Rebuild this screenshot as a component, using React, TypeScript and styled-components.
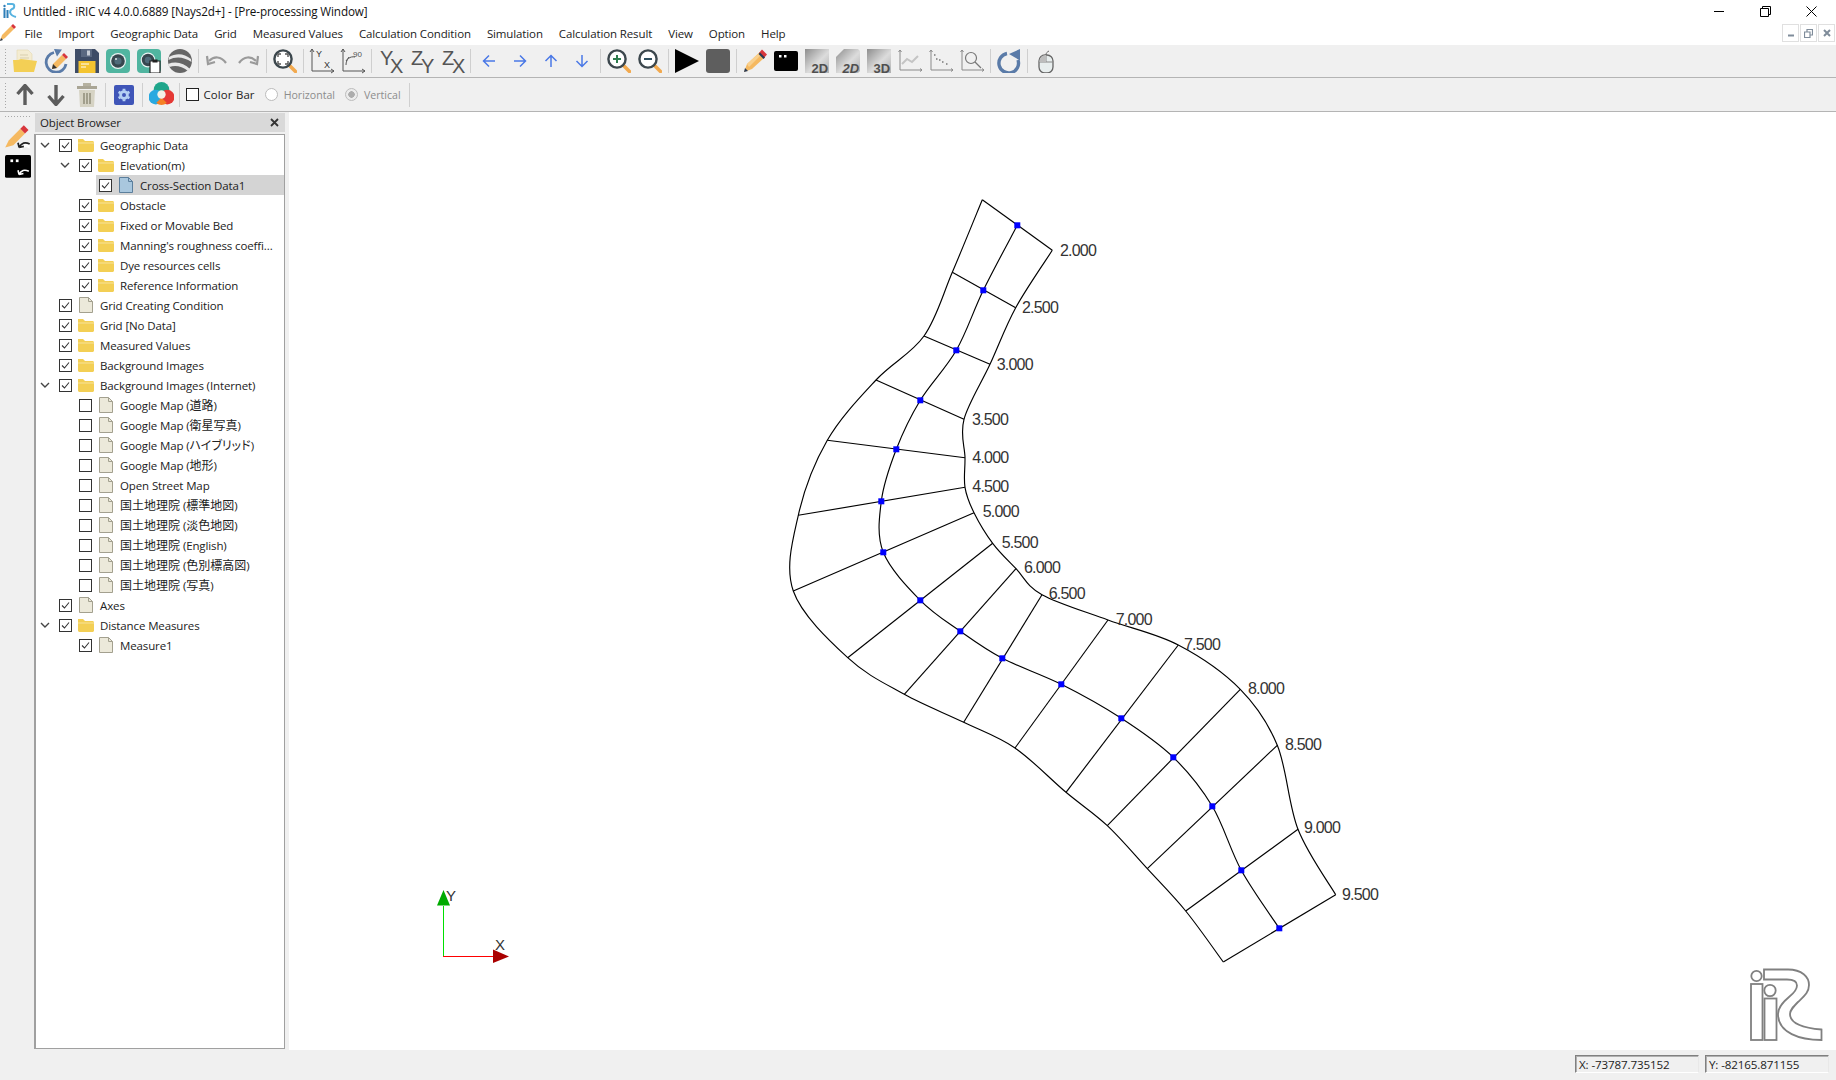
import React from "react";
import styled, { createGlobalStyle } from "styled-components";

const UI_FONT = `"Open Sans", "Noto Sans CJK JP", sans-serif`;

const GlobalStyle = createGlobalStyle`
  html, body {
    margin: 0;
    padding: 0;
    background: #fff;
    overflow: hidden;
  }
  body {
    font-family: ${UI_FONT};
    font-size: 12px;
    color: #222;
  }
`;

const Window = styled.div`
  width: 1836px;
  height: 1080px;
  display: flex;
  flex-direction: column;
  overflow: hidden;
`;

const TitleBar = styled.div`
  height: 22px;
  display: flex;
  align-items: center;
  padding: 0 2px 0 3px;
  background: #fff;
`;

const TitleText = styled.span`
  margin-left: 6px;
  font-size: 11.7px;
  letter-spacing: -0.12px;
  color: #111;
`;

const WinButton = styled.div`
  width: 46px;
  height: 22px;
  display: flex;
  align-items: center;
  justify-content: center;
`;

const WinButtons = styled.div`
  margin-left: auto;
  display: flex;
`;

const MenuBar = styled.div`
  height: 22px;
  display: flex;
  align-items: center;
  padding-right: 1px;
  background: #fff;
  border-bottom: 1px solid #fff;
`;

const MenuIcon = styled.div`
  width: 16px;
  height: 18px;
  display: flex;
  margin-right: 0.5px;
`;

const MenuItem = styled.span`
  padding: 0 8px;
  font-size: 11.5px;
  letter-spacing: -0.12px;
  white-space: nowrap;
`;

const MdiButtons = styled.div`
  margin-left: auto;
  display: flex;
  gap: 1px;
`;

const MdiButton = styled.div`
  width: 15px;
  height: 16px;
  border: 1px solid #e0e0e0;
  display: flex;
  align-items: center;
  justify-content: center;
`;

const Toolbar = styled.div<{ $h: number }>`
  height: ${({ $h }) => $h}px;
  display: flex;
  align-items: center;
  padding-left: 4px;
  background: #f0f0f0;
  border-bottom: 1px solid #b4b4b4;
`;

const Handle = styled.div`
  width: 3px;
  height: 26px;
  margin-right: 2.5px;
  background-image: radial-gradient(circle, #a8a8a8 0.8px, transparent 1px);
  background-size: 3px 3px;
`;

const ToolButton = styled.div`
  width: 31px;
  height: 26px;
  display: flex;
  align-items: center;
  justify-content: center;
  flex: none;
`;

const Separator = styled.div`
  width: 1px;
  height: 24px;
  margin: 0 2.5px;
  background: #cfcfcf;
  flex: none;
`;

const EndSeparator = styled(Separator)`
  margin-left: 8px;
`;

const OptionBox = styled.div`
  width: 11px;
  height: 11px;
  margin: 0 5px 0 3px;
  border: 1px solid #222;
  background: #fff;
  flex: none;
`;

const OptionText = styled.span<{ $off?: boolean }>`
  font-size: ${({ $off }) => ($off ? "10.6px" : "11.4px")};
  letter-spacing: ${({ $off }) => ($off ? "0" : "0.1px")};
  word-spacing: ${({ $off }) => ($off ? "0" : "0.5px")};
  color: ${({ $off }) => ($off ? "#8c8c8c" : "#222")};
`;

const Radio = styled.div<{ $on?: boolean }>`
  width: 11px;
  height: 11px;
  margin: 0 6px 0 10px;
  border: 1px solid #bcbcbc;
  border-radius: 50%;
  background: ${({ $on }) => ($on ? "radial-gradient(circle, #adadad 3px, #ececec 3.5px)" : "#fff")};
  flex: none;
`;

const Main = styled.div`
  flex: 1;
  display: flex;
  min-height: 0;
`;

const Dock = styled.div`
  width: 289px;
  display: flex;
  background: #f0f0f0;
  flex: none;
`;

const Rail = styled.div`
  width: 35px;
  display: flex;
  flex-direction: column;
  align-items: center;
  flex: none;
`;

const RailHandle = styled.div`
  width: 28px;
  height: 3px;
  margin: 3px 0 4px;
  background-image: radial-gradient(circle, #a8a8a8 0.8px, transparent 1px);
  background-size: 3px 3px;
`;

const RailButton = styled.div`
  width: 30px;
  height: 30px;
  display: flex;
  align-items: center;
  justify-content: center;
`;

const Panel = styled.div`
  width: 250px;
  padding: 1px 0;
  display: flex;
  flex-direction: column;
  flex: none;
`;

const PanelTitle = styled.div`
  height: 19px;
  margin-bottom: 2px;
  padding: 0 6px 0 5px;
  display: flex;
  align-items: center;
  justify-content: space-between;
  background: #d9d9d9;
  font-size: 11.5px;
  letter-spacing: -0.12px;
`;

const Tree = styled.div`
  flex: 1;
  background: #fff;
  border: 1px solid #a0a0a0;
  border-width: 1px 1px 1px 2px;
  margin-left: -1px;
`;

const Row = styled.div<{ $depth: number }>`
  height: 20px;
  display: flex;
  align-items: center;
  padding-left: ${({ $depth }) => $depth * 20}px;
`;

const Arrow = styled.div`
  width: 20px;
  height: 20px;
  display: flex;
  align-items: center;
  padding-left: 4px;
  box-sizing: border-box;
  flex: none;
`;

const RowBody = styled.div<{ $selected?: boolean }>`
  flex: 1;
  height: 20px;
  display: flex;
  align-items: center;
  padding-left: 3px;
  min-width: 0;
  background: ${({ $selected }) => ($selected ? "#d4d4d4" : "transparent")};
`;

const Check = styled.div`
  width: 11px;
  height: 11px;
  border: 1px solid #333;
  background: #fff;
  display: flex;
  align-items: center;
  justify-content: center;
  flex: none;
`;

const NodeIcon = styled.div`
  width: 16px;
  height: 16px;
  margin: 0 6px 0 6px;
  display: flex;
  align-items: center;
  justify-content: center;
  flex: none;
`;

const NodeText = styled.span`
  font-size: 11.5px;
  letter-spacing: -0.12px;
  white-space: nowrap;
`;

const CjkRun = styled.span`
  font-size: 12px;
  letter-spacing: 0;
  font-feature-settings: "palt";
`;

const Canvas = styled.div`
  flex: 1;
  background: #fff;
  min-width: 0;
`;

const CanvasSvg = styled.svg`
  display: block;
  width: 100%;
  height: 100%;
`;

const StatusBar = styled.div`
  height: 30px;
  display: flex;
  align-items: center;
  justify-content: flex-end;
  gap: 6px;
  padding: 0 7px 2px 0;
  box-sizing: border-box;
  background: #f0f0f0;
`;

const StatusBox = styled.div`
  width: 124px;
  height: 18px;
  box-sizing: border-box;
  padding-left: 3px;
  display: flex;
  align-items: center;
  border: 1px solid;
  border-color: #808080 #e8e8e8 #fff #808080;
  box-shadow: inset 1px 1px 0 #b0b0b0;
  font-size: 11.6px;
  letter-spacing: -0.12px;
`;

// ---------- toolbar icons ----------

const Ico = ({ children, size = 24 }: { children: React.ReactNode; size?: number }) => (
  <svg width={size} height={size} viewBox="0 0 24 24">
    {children}
  </svg>
);

const FolderOpen = () => (
  <Ico>
    <path d="M4 1h11l4 4v9H4z" fill="#f4ecd2" stroke="#e4d8b0" strokeWidth="0.6" />
    <path d="M7 6h8M7 9h9M7 12h9" stroke="#d9cfae" strokeWidth="1" />
    <path d="M0 11h5l3-1 16 2-3 11H1z" fill="#f3cf55" />
  </Ico>
);

const ReloadEdit = () => (
  <Ico>
    <path d="M10 3.500A10 10 0 1 0 22 15" fill="none" stroke="#5a7ba8" strokeWidth="2.800" />
    <path d="M10 0l8 .5-5 7z" fill="#5a7ba8" />
    <path d="M8 20l1-5L18 6l4 4-9 9z" fill="#f5b961" />
    <path d="M18 6l2-2 4 4-2 2z" fill="#d8363c" />
    <path d="M8 20l1-5 4 4z" fill="#333" />
  </Ico>
);

const Save = () => (
  <Ico>
    <path d="M0 0h20l4 4v20H0z" fill="#3e4c66" />
    <rect x="6" y="0" width="11" height="8" fill="#5a6880" />
    <rect x="12" y="1.500" width="3" height="5" fill="#c7cdd6" />
    <rect x="3.500" y="12" width="17" height="12" fill="#f4c430" />
    <path d="M6 15h8M6 18h5" stroke="#fff" strokeWidth="1" />
  </Ico>
);

const Camera = () => (
  <Ico>
    <rect width="24" height="24" rx="4" fill="#50b5a0" />
    <circle cx="12" cy="12" r="8" fill="#eaf4f3" />
    <circle cx="12" cy="12" r="6.800" fill="#37474f" />
    <circle cx="12" cy="12" r="3.600" fill="#4f6b7a" />
    <circle cx="10" cy="10" r="1" fill="#dfe8ea" />
  </Ico>
);

const CameraCopy = () => (
  <Ico>
    <rect width="24" height="24" rx="4" fill="#50b5a0" />
    <circle cx="11" cy="11" r="7.400" fill="#eaf4f3" />
    <circle cx="11" cy="11" r="6.200" fill="#37474f" />
    <circle cx="11" cy="11" r="3.200" fill="#4f6b7a" />
    <path d="M13 12h10v12H13z" fill="#fff" stroke="#222" strokeWidth="1.200" />
    <rect x="15.500" y="10.500" width="5" height="3" fill="#222" />
  </Ico>
);

const Globe = () => (
  <Ico>
    <circle cx="12" cy="12" r="12" fill="#666" />
    <path d="M1 8c7-4 15-4 22 2l.5 3C16 8 8 7 .5 11zM0 15c8-3 16-1 22 5l-2 2C14 17 7 16 1.500 18z" fill="#e8e8e8" />
  </Ico>
);

const UndoIcon = ({ flip }: { flip?: boolean }) => (
  <Ico>
    <g transform={flip ? "translate(24 0) scale(-1 1)" : undefined}>
      <path d="M4 12c5-5 12-5 17 2" fill="none" stroke="#9a9a9a" strokeWidth="2.200" />
      <path d="M2 7l1 8 7-2" fill="none" stroke="#9a9a9a" strokeWidth="2.200" />
    </g>
  </Ico>
);

const Lens = ({ children }: { children?: React.ReactNode }) => (
  <Ico>
    <path d="M16 16l6.500 6.500" stroke="#f2a94e" strokeWidth="3.600" strokeLinecap="round" />
    <circle cx="10" cy="10" r="8.600" fill="#fff" stroke="#3c474d" strokeWidth="2.400" />
    {children}
  </Ico>
);

const GlyphPair = ({ a, b }: { a: string; b: string }) => (
  <svg width="31" height="32" viewBox="0 0 31 32">
    <text x="5" y="20" fontFamily="Liberation Sans" fontSize="20" fill="#555">{a}</text>
    <text x="15" y="28" fontFamily="Liberation Sans" fontSize="20" fill="#555">{b}</text>
  </svg>
);

const AxisIcon = ({ angle }: { angle?: boolean }) => (
  <svg width="26" height="26" viewBox="0 0 26 26">
    <path d="M3 1v22h22M1 4l2-3 2 3M22 21l3 2-3 2" fill="none" stroke="#555" strokeWidth="1" />
    {angle ? (
      <>
        <path d="M6 17c0-6 4-9 9-8M9 9l-3 4" fill="none" stroke="#555" strokeWidth="1" />
        <text x="13" y="9" fontFamily="Liberation Sans" fontSize="8" fill="#555">90</text>
      </>
    ) : (
      <>
        <text x="7" y="9" fontFamily="Liberation Sans" fontSize="9" fill="#333">Y</text>
        <text x="15" y="20" fontFamily="Liberation Sans" fontSize="9" fill="#333">X</text>
      </>
    )}
  </svg>
);

const BlueArrow = ({ rot }: { rot: number }) => (
  <svg width="14" height="14" viewBox="0 0 14 14">
    <g transform={`rotate(${rot} 7 7)`}>
      <path d="M1 7h12M7 1.500L1.500 7 7 12.500" fill="none" stroke="#4a78e6" strokeWidth="1.500" />
    </g>
  </svg>
);

const Pencil = () => (
  <Ico>
    <path d="M1 23l3-8L17 3l5 5L9 20z" fill="#f5b961" />
    <path d="M4 15l13-12 2 2L6 18z" fill="#f9d08d" />
    <path d="M16 4l3-3.500 5 5L21 9z" fill="#d8363c" />
    <path d="M15.500 5l1.500-1.500 5 5L20.500 10z" fill="#283a55" />
    <path d="M1 23l1-4 3 3z" fill="#283a55" />
  </Ico>
);

const Console = () => (
  <Ico>
    <rect x="0" y="2" width="24" height="20" rx="2" fill="#000" />
    <rect x="5" y="6" width="2.500" height="2.500" fill="#fff" />
    <rect x="10" y="6" width="2.500" height="2.500" fill="#fff" />
  </Ico>
);

const ViewTile = ({ id, label, cut }: { id: string; label: string; cut?: boolean }) => (
  <svg width="24" height="32" viewBox="0 -4 24 32">
    <defs>
      <linearGradient id={id} x1="0" y1="0" x2="1" y2="1">
        <stop offset="0" stopColor="#8d8d8d" />
        <stop offset="0.55" stopColor="#dcdcdc" />
        <stop offset="1" stopColor="#b0b0b0" />
      </linearGradient>
    </defs>
    <path d={cut ? "M8 0h14l2 2v20l-2 2H0V8z" : "M0 0h24v24H0z"} fill={`url(#${id})`} />
    <text x="6.500" y="23.500" fontFamily="Liberation Sans" fontWeight="700" fontStyle={cut ? "italic" : "normal"} fontSize="13" fill="#4f4f4f">
      {label}
    </text>
  </svg>
);

const PlotFrame = ({ children }: { children: React.ReactNode }) => (
  <svg width="25" height="24" viewBox="0 0 25 24">
    <path d="M2 1v20h22M.5 3L2 1l1.500 2M22 19.500l2 1.500-2 1.500" fill="none" stroke="#8a8a8a" strokeWidth="1" />
    {children}
  </svg>
);

const ReloadBig = () => (
  <Ico>
    <path d="M10 4.500A9.800 9.800 0 1 0 21 11" fill="none" stroke="#5a7ba8" strokeWidth="3.400" />
    <path d="M12 5l11-5v11.500z" fill="#5a7ba8" />
  </Ico>
);

const MouseIcon = () => (
  <Ico>
    <path d="M12 6c0-2 1-3 3-4" fill="none" stroke="#666" strokeWidth="1" />
    <rect x="5" y="6" width="14" height="18" rx="6" fill="#e8eeee" stroke="#666" strokeWidth="1.300" />
    <path d="M5 13h14M12 6v7" stroke="#888" strokeWidth="1" />
    <path d="M5.500 13V12a6 6 0 0 1 6-6H12v7z" fill="#bdbdbd" />
  </Ico>
);

const BigArrow = ({ down }: { down?: boolean }) => (
  <svg width="18" height="22" viewBox="0 0 18 22">
    <g transform={down ? "rotate(180 9 11)" : undefined}>
      <path d="M1.500 10L9 1.500 16.500 10M9 3v18" fill="none" stroke="#5c5c5c" strokeWidth="3.400" />
    </g>
  </svg>
);

const Trash = () => (
  <svg width="20" height="24" viewBox="0 0 20 24">
    <rect x="6" y="0" width="8" height="3" fill="#b5b1a0" />
    <rect x="0" y="3" width="20" height="3" fill="#a9a595" />
    <path d="M2 7h16l-1 17H3z" fill="#d6d3c4" />
    <path d="M7 10v11M10 10v11M13 10v11" stroke="#86836f" strokeWidth="1.300" />
  </svg>
);

const GearTile = () => (
  <svg width="20" height="20" viewBox="0 0 20 20">
    <rect width="20" height="20" rx="2" fill="#3f55b8" />
    <circle cx="10" cy="10" r="3.400" fill="none" stroke="#b4d0f4" strokeWidth="2.800" />
    <path d="M10 3.800v2M10 14.200v2M4.600 6.900l1.700 1M13.700 12.100l1.700 1M4.600 13.100l1.700-1M13.700 7.900l1.700-1" stroke="#b4d0f4" strokeWidth="2.800" />
  </svg>
);

const ColorWheel = () => (
  <Ico size={25}>
    <circle cx="12" cy="7.500" r="7.500" fill="#1fa68b" />
    <circle cx="6.500" cy="14.500" r="7" fill="#29a9e0" />
    <circle cx="17.500" cy="14.500" r="7" fill="#e53935" />
    <path d="M7 20a7 7 0 0 0 10 0l-5-5z" fill="#f58025" />
    <circle cx="12" cy="12" r="4" fill="#f4f1e6" />
  </Ico>
);

// ---------- menu / rail icons ----------

const MenuPencil = () => (
  <svg width="16" height="18" viewBox="0 0 16 18">
    <path d="M0 17l2-6 9-9 3 3-9 9z" fill="#f5b961" />
    <path d="M11 2l2-2 3 3-2 2z" fill="#d8363c" />
    <path d="M0 17l1-3 2 2z" fill="#283a55" />
  </svg>
);

const AppMark = () => (
  <svg width="14" height="16" viewBox="0 0 14 16">
    <rect x="0.500" y="5" width="2" height="10" fill="#2f7fb8" />
    <rect x="3.500" y="7" width="2" height="8" fill="#2f7fb8" />
    <circle cx="1.500" cy="3" r="1.200" fill="#2f7fb8" />
    <path d="M4 1h5c3 0 3 4 0 5-3 2-3 6 4 8" fill="none" stroke="#58b3e0" strokeWidth="2" />
  </svg>
);

// ---------- tree icons ----------

const FolderIcon = () => (
  <svg width="16" height="14" viewBox="0 0 16 14">
    <path d="M0 1h5l2 2h8l1 1v9l-1 1H1l-1-1z" fill="#f3cf55" />
    <path d="M0 5h16" stroke="#f8e39a" strokeWidth="1" />
  </svg>
);

const DocIcon = ({ blue }: { blue?: boolean }) => (
  <svg width="14" height="16" viewBox="0 0 14 16">
    <path
      d="M.5.500h9l4 4v11H.5z"
      fill={blue ? "#a9c7de" : "#ece9da"}
      stroke={blue ? "#5c7f9c" : "#a3a08f"}
      strokeWidth="1"
    />
    <path d="M9.500.500v4h4" fill="none" stroke={blue ? "#5c7f9c" : "#a3a08f"} strokeWidth="1" />
  </svg>
);

const Chevron = () => (
  <svg width="10" height="7" viewBox="0 0 10 7">
    <path d="M1 1l4 4 4-4" fill="none" stroke="#444" strokeWidth="1.400" />
  </svg>
);

const Tick = () => (
  <svg width="11" height="11" viewBox="0 0 11 11">
    <path d="M2 5.500l2.500 2.500L9 2.500" fill="none" stroke="#333" strokeWidth="1.100" />
  </svg>
);

// ---------- data ----------

interface NodeI {
  label: string;
  depth: number;
  icon: "folder" | "doc" | "blue";
  open?: boolean;
  checked?: boolean;
  selected?: boolean;
}

const nodes: NodeI[] = [
  { label: "Geographic Data", depth: 0, icon: "folder", open: true, checked: true },
  { label: "Elevation(m)", depth: 1, icon: "folder", open: true, checked: true },
  { label: "Cross-Section Data1", depth: 2, icon: "blue", checked: true, selected: true },
  { label: "Obstacle", depth: 1, icon: "folder", checked: true },
  { label: "Fixed or Movable Bed", depth: 1, icon: "folder", checked: true },
  { label: "Manning's roughness coeffi...", depth: 1, icon: "folder", checked: true },
  { label: "Dye resources cells", depth: 1, icon: "folder", checked: true },
  { label: "Reference Information", depth: 1, icon: "folder", checked: true },
  { label: "Grid Creating Condition", depth: 0, icon: "doc", checked: true },
  { label: "Grid [No Data]", depth: 0, icon: "folder", checked: true },
  { label: "Measured Values", depth: 0, icon: "folder", checked: true },
  { label: "Background Images", depth: 0, icon: "folder", checked: true },
  { label: "Background Images (Internet)", depth: 0, icon: "folder", open: true, checked: true },
  { label: "Google Map (道路)", depth: 1, icon: "doc" },
  { label: "Google Map (衛星写真)", depth: 1, icon: "doc" },
  { label: "Google Map (ハイブリッド)", depth: 1, icon: "doc" },
  { label: "Google Map (地形)", depth: 1, icon: "doc" },
  { label: "Open Street Map", depth: 1, icon: "doc" },
  { label: "国土地理院 (標準地図)", depth: 1, icon: "doc" },
  { label: "国土地理院 (淡色地図)", depth: 1, icon: "doc" },
  { label: "国土地理院 (English)", depth: 1, icon: "doc" },
  { label: "国土地理院 (色別標高図)", depth: 1, icon: "doc" },
  { label: "国土地理院 (写真)", depth: 1, icon: "doc" },
  { label: "Axes", depth: 0, icon: "doc", checked: true },
  { label: "Distance Measures", depth: 0, icon: "folder", open: true, checked: true },
  { label: "Measure1", depth: 1, icon: "doc", checked: true },
];

const menus = [
  "File",
  "Import",
  "Geographic Data",
  "Grid",
  "Measured Values",
  "Calculation Condition",
  "Simulation",
  "Calculation Result",
  "View",
  "Option",
  "Help",
];

type Pt = [number, number];

// cross sections, station by station
const leftBank: Pt[] = [
  [982.3, 199.7], [952.3, 272.3], [924, 336], [876, 380], [827.3, 440.3], [798.3, 515.3],
  [793.3, 591], [847.7, 657.7], [904.3, 694.3], [963.7, 722.3], [1015, 748], [1066, 792.3],
  [1107.3, 825.7], [1147.3, 868.7], [1185.7, 911], [1223.3, 962],
];
const center: Pt[] = [
  [1017.3, 225.3], [983.3, 290.3], [956.3, 350.3], [920.3, 400.3], [896.3, 449.3], [881.3, 501.3],
  [883.3, 552.3], [920.3, 600.3], [960.3, 631.3], [1002.3, 658.3], [1061.3, 684.3], [1121.3, 718.3],
  [1173.3, 757.3], [1212.3, 806.3], [1241.3, 870.3], [1279.3, 928.3],
];
const rightBank: Pt[] = [
  [1052.3, 250.3], [1015.7, 307.7], [990, 364.3], [964, 419.3], [965, 457.7], [965, 487.3],
  [974, 512.7], [992.7, 543.3], [1016, 568.7], [1042, 594.7], [1108, 620], [1178.3, 645],
  [1240.3, 689.3], [1277.3, 745.3], [1298, 829.3], [1335.7, 894.7],
];

const stations: { text: string; x: number; y: number }[] = [
  { text: "2.000", x: 1060, y: 256 },
  { text: "2.500", x: 1022, y: 312.7 },
  { text: "3.000", x: 996.7, y: 369.7 },
  { text: "3.500", x: 972, y: 425 },
  { text: "4.000", x: 972.3, y: 463 },
  { text: "4.500", x: 972.3, y: 492 },
  { text: "5.000", x: 982.7, y: 516.7 },
  { text: "5.500", x: 1001.7, y: 547.7 },
  { text: "6.000", x: 1024, y: 572.7 },
  { text: "6.500", x: 1048.7, y: 598.7 },
  { text: "7.000", x: 1115.7, y: 624.7 },
  { text: "7.500", x: 1184, y: 650 },
  { text: "8.000", x: 1248, y: 694 },
  { text: "8.500", x: 1285, y: 750 },
  { text: "9.000", x: 1304, y: 832.7 },
  { text: "9.500", x: 1342, y: 899.7 },
];

// Catmull-Rom through the stations
const spline = (pts: Pt[]) => {
  let d = `M${pts[0][0]},${pts[0][1]}`;
  for (let i = 0; i < pts.length - 1; i++) {
    const p0 = pts[Math.max(i - 1, 0)];
    const p1 = pts[i];
    const p2 = pts[i + 1];
    const p3 = pts[Math.min(i + 2, pts.length - 1)];
    const c1x = p1[0] + (p2[0] - p0[0]) / 6;
    const c1y = p1[1] + (p2[1] - p0[1]) / 6;
    const c2x = p2[0] - (p3[0] - p1[0]) / 6;
    const c2y = p2[1] - (p3[1] - p1[1]) / 6;
    d += ` C${c1x},${c1y} ${c2x},${c2y} ${p2[0]},${p2[1]}`;
  }
  return d;
};

const GridDrawing = () => (
  <CanvasSvg viewBox="289 112 1547 938">
    <g fill="none" stroke="#000" strokeWidth="1.150">
      <path d={spline(leftBank)} />
      <path d={spline(center)} />
      <path d={spline(rightBank)} />
      {leftBank.map((p, i) => (
        <line key={i} x1={p[0]} y1={p[1]} x2={rightBank[i][0]} y2={rightBank[i][1]} />
      ))}
    </g>
    {center.map((p, i) => (
      <rect key={i} x={p[0] - 3} y={p[1] - 3} width="6" height="6" fill="#0000ff" />
    ))}
    {stations.map((s) => (
      <text key={s.text} x={s.x} y={s.y} fontFamily="Liberation Sans" fontSize="16" letterSpacing="-0.8" fill="#333">
        {s.text}
      </text>
    ))}

    {/* axes */}
    <line x1="443.500" y1="906" x2="443.500" y2="956" stroke="#00e000" strokeWidth="1" />
    <line x1="443" y1="956.500" x2="494" y2="956.500" stroke="#ff0000" strokeWidth="1" />
    <path d="M443.500 890L450 905.500H437z" fill="#00aa00" />
    <path d="M509 956.500L493 949.500V963z" fill="#aa0000" />
    <text x="446" y="901" fontFamily="Liberation Sans" fontSize="15" fill="#333">Y</text>
    <text x="495" y="950" fontFamily="Liberation Sans" fontSize="15" fill="#333">X</text>

    {/* logo */}
    <g fill="none" stroke="#808080" strokeWidth="1.800">
      <circle cx="1756.500" cy="976" r="5.200" />
      <rect x="1751" y="984" width="11.500" height="56" />
      <circle cx="1770" cy="990.500" r="5.700" />
      <rect x="1764.500" y="998.500" width="12" height="41.500" />
      <path d="M1764,969.500 L1788,969.500 C1802,969.500 1809,977 1809,985 C1809,993 1803,997 1798,1002 C1793,1007 1790,1010 1790,1014 C1790,1023 1803,1028 1821.500,1029.500 L1821.500,1040 C1800,1040 1778,1033 1778,1014 C1778,1007 1783,1002 1789,997 C1794,993 1797,990 1797,985.500 C1797,981 1793,979.500 1787,979.500 L1764,979.500 Z" />
    </g>
  </CanvasSvg>
);

// Japanese runs keep their full size, the latin text around them is squeezed
const NodeLabel = ({ text }: { text: string }) => (
  <NodeText>
    {text.split(/([\u3040-\u9fff]+)/).map((part, i) =>
      i % 2 === 1 ? <CjkRun key={i}>{part}</CjkRun> : part
    )}
  </NodeText>
);

const TreeRow = ({ node }: { node: NodeI }) => (
  <Row $depth={node.depth}>
    <Arrow>{node.open && <Chevron />}</Arrow>
    <RowBody $selected={node.selected}>
      <Check>{node.checked && <Tick />}</Check>
      <NodeIcon>
        {node.icon === "folder" ? <FolderIcon /> : <DocIcon blue={node.icon === "blue"} />}
      </NodeIcon>
      <NodeLabel text={node.label} />
    </RowBody>
  </Row>
);

const App = () => (
  <Window>
    <GlobalStyle />
    <TitleBar>
      <AppMark />
      <TitleText>Untitled - iRIC v4 4.0.0.6889 [Nays2d+] - [Pre-processing Window]</TitleText>
      <WinButtons>
        <WinButton>
          <svg width="10" height="10" viewBox="0 0 10 10">
            <path d="M0 5.500h10" stroke="#000" strokeWidth="1" />
          </svg>
        </WinButton>
        <WinButton>
          <svg width="11" height="11" viewBox="0 0 11 11">
            <path d="M.5 2.500h8v8h-8zM2.500 2.500v-2h8v8h-2" fill="none" stroke="#000" strokeWidth="1" />
          </svg>
        </WinButton>
        <WinButton>
          <svg width="11" height="11" viewBox="0 0 11 11">
            <path d="M.5.500l10 10M10.500.500l-10 10" stroke="#000" strokeWidth="1" />
          </svg>
        </WinButton>
      </WinButtons>
    </TitleBar>

    <MenuBar>
      <MenuIcon>
        <MenuPencil />
      </MenuIcon>
      {menus.map((m) => (
        <MenuItem key={m}>{m}</MenuItem>
      ))}
      <MdiButtons>
        <MdiButton>
          <svg width="8" height="8" viewBox="0 0 8 8">
            <path d="M1 6.500h6" stroke="#7f8c9a" strokeWidth="2" />
          </svg>
        </MdiButton>
        <MdiButton>
          <svg width="9" height="9" viewBox="0 0 9 9">
            <path d="M.5 3h5.500v5.500H.5zM3 3V.5h5.500V6H6" fill="none" stroke="#7f8c9a" strokeWidth="1.200" />
          </svg>
        </MdiButton>
        <MdiButton>
          <svg width="8" height="8" viewBox="0 0 8 8">
            <path d="M1 1l6 6M7 1l-6 6" stroke="#7f8c9a" strokeWidth="2" />
          </svg>
        </MdiButton>
      </MdiButtons>
    </MenuBar>

    <Toolbar $h={32}>
      <Handle />
      <ToolButton><FolderOpen /></ToolButton>
      <ToolButton><ReloadEdit /></ToolButton>
      <ToolButton><Save /></ToolButton>
      <ToolButton><Camera /></ToolButton>
      <ToolButton><CameraCopy /></ToolButton>
      <ToolButton><Globe /></ToolButton>
      <Separator />
      <ToolButton><UndoIcon /></ToolButton>
      <ToolButton><UndoIcon flip /></ToolButton>
      <Separator />
      <ToolButton>
        <Lens>
          <path d="M5 8V5h3M12 5h3v3M15 12v3h-3M8 15H5v-3" fill="none" stroke="#555" strokeWidth="1.400" />
        </Lens>
      </ToolButton>
      <Separator />
      <ToolButton><AxisIcon /></ToolButton>
      <ToolButton><AxisIcon angle /></ToolButton>
      <Separator />
      <ToolButton><GlyphPair a="Y" b="X" /></ToolButton>
      <ToolButton><GlyphPair a="Z" b="Y" /></ToolButton>
      <ToolButton><GlyphPair a="Z" b="X" /></ToolButton>
      <Separator />
      <ToolButton><BlueArrow rot={0} /></ToolButton>
      <ToolButton><BlueArrow rot={180} /></ToolButton>
      <ToolButton><BlueArrow rot={90} /></ToolButton>
      <ToolButton><BlueArrow rot={270} /></ToolButton>
      <Separator />
      <ToolButton>
        <Lens>
          <path d="M6 10h8M10 6v8" stroke="#2e7d4f" strokeWidth="2" />
        </Lens>
      </ToolButton>
      <ToolButton>
        <Lens>
          <path d="M6 10h8" stroke="#2f4f5f" strokeWidth="2" />
        </Lens>
      </ToolButton>
      <Separator />
      <ToolButton>
        <Ico><path d="M0 0l24 12L0 24z" fill="#000" /></Ico>
      </ToolButton>
      <ToolButton>
        <Ico><rect width="24" height="24" rx="3" fill="#5e5e5e" /></Ico>
      </ToolButton>
      <Separator />
      <ToolButton><Pencil /></ToolButton>
      <ToolButton><Console /></ToolButton>
      <ToolButton><ViewTile id="tileA" label="2D" /></ToolButton>
      <ToolButton><ViewTile id="tileB" label="2D" cut /></ToolButton>
      <ToolButton><ViewTile id="tileC" label="3D" /></ToolButton>
      <ToolButton>
        <PlotFrame>
          <path d="M4 15l5-5 5 3 6-6" fill="none" stroke="#c4c4c4" strokeWidth="2" />
        </PlotFrame>
      </ToolButton>
      <ToolButton>
        <PlotFrame>
          <path d="M5 6h1.500M10 11h1.500M13 13h1.500M17 15h1.500M7 10h1.500" stroke="#777" strokeWidth="1.500" />
        </PlotFrame>
      </ToolButton>
      <ToolButton>
        <PlotFrame>
          <circle cx="11" cy="9" r="5.500" fill="none" stroke="#777" strokeWidth="1.200" />
          <path d="M15 13l6 6" stroke="#777" strokeWidth="1.300" />
        </PlotFrame>
      </ToolButton>
      <Separator />
      <ToolButton><ReloadBig /></ToolButton>
      <Separator />
      <ToolButton><MouseIcon /></ToolButton>
    </Toolbar>

    <Toolbar $h={33}>
      <Handle />
      <ToolButton><BigArrow /></ToolButton>
      <ToolButton><BigArrow down /></ToolButton>
      <ToolButton><Trash /></ToolButton>
      <Separator />
      <ToolButton><GearTile /></ToolButton>
      <Separator />
      <ToolButton><ColorWheel /></ToolButton>
      <Separator />
      <OptionBox />
      <OptionText>Color Bar</OptionText>
      <Radio />
      <OptionText $off>Horizontal</OptionText>
      <Radio $on />
      <OptionText $off>Vertical</OptionText>
      <EndSeparator />
    </Toolbar>

    <Main>
      <Dock>
        <Rail>
          <RailHandle />
          <RailButton>
            <Ico size={28}>
              <path d="M1 21l3-6 10-10 4 4-10 10z" fill="#f5b961" />
              <path d="M14 5l3-3 4 4-3 3z" fill="#d8363c" />
              <path d="M12 21c2-5 6-6 10-3v4c-3-2-5-2-7 1z" fill="#fff" />
              <path d="M13 21c2-4 5-5 9-3M13 21l-1-4M13 21l4-1" fill="none" stroke="#222" strokeWidth="1.500" />
            </Ico>
          </RailButton>
          <RailButton>
            <Ico size={26}>
              <rect x="0" y="1" width="24" height="21" rx="1.500" fill="#000" />
              <rect x="5" y="5" width="2.500" height="2.500" fill="#fff" />
              <rect x="10" y="5" width="2.500" height="2.500" fill="#fff" />
              <path d="M13 19c2-4 5-5 9-3M13 19l-1-4M13 19l4-1" fill="none" stroke="#fff" strokeWidth="1.500" />
            </Ico>
          </RailButton>
        </Rail>
        <Panel>
          <PanelTitle>
            Object Browser
            <svg width="9" height="9" viewBox="0 0 9 9">
              <path d="M1 1l7 7M8 1L1 8" stroke="#333" strokeWidth="1.800" />
            </svg>
          </PanelTitle>
          <Tree>
            {nodes.map((n) => (
              <TreeRow key={n.label} node={n} />
            ))}
          </Tree>
        </Panel>
      </Dock>
      <Canvas>
        <GridDrawing />
      </Canvas>
    </Main>

    <StatusBar>
      <StatusBox>X: -73787.735152</StatusBox>
      <StatusBox>Y: -82165.871155</StatusBox>
    </StatusBar>
  </Window>
);

export default App;
